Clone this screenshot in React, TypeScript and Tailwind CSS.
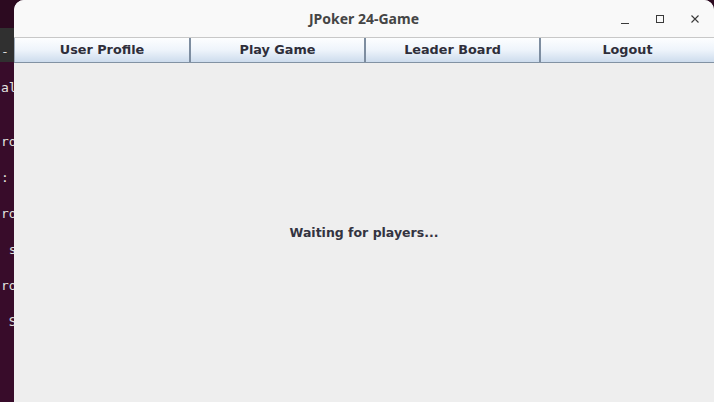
const termLines = ["al", "", "", "ro", "", ":", "", "ro", "", " s", "", "ro", "", " S"];

const tabs = ["User Profile", "Play Game", "Leader Board", "Logout"];

function WindowControls() {
  return (
    <div className="flex items-center gap-[25px] pr-[14px] text-[#3a3a3a]">
      <svg width="10" height="10" viewBox="0 0 10 10" className="mt-[2px]">
        <path d="M1 8.5h8" stroke="currentColor" strokeWidth="1.1" />
      </svg>
      <svg width="10" height="10" viewBox="0 0 10 10">
        <rect x="1.5" y="1.5" width="7" height="7" fill="none" stroke="currentColor" strokeWidth="1" />
      </svg>
      <svg width="10" height="10" viewBox="0 0 10 10">
        <path d="M1.5 1.5l7 7M8.5 1.5l-7 7" stroke="currentColor" strokeWidth="1.1" />
      </svg>
    </div>
  );
}

export default function App() {
  return (
    <div className="w-[714px] h-[402px] flex bg-[#2c0a20] overflow-hidden">
      <div className="w-[14px] flex flex-col overflow-hidden shrink-0">
        <div className="h-[28px] bg-[#2c0a20]" />
        <div className="h-[34px] bg-[#303030] text-[#d8d8d8] font-['DejaVu_Sans_Mono',monospace] text-[13px] leading-[18px] pt-[15px] pl-[1px]">
          -
        </div>
        <div className="flex-1 bg-[#380c2a] pt-[17px] text-[#e4e4e0] font-['DejaVu_Sans_Mono',monospace] text-[13px] leading-[18px] whitespace-pre pl-[1px]">
          {termLines.map((l, i) => (
            <div key={i} className="h-[18px]">{l}</div>
          ))}
        </div>
      </div>

      <div className="flex-1 flex flex-col rounded-t-[10px] overflow-hidden bg-[#eeeeee]">
        <div className="h-[38px] bg-[#f9f9f9] border-b border-[#c8c8c8] flex items-center relative">
          <div className="flex-1 text-center text-[14px] font-bold text-[#454545] font-['Noto_Sans',sans-serif]">
            JPoker 24-Game
          </div>
          <div className="absolute right-0 top-0 h-full flex items-center">
            <WindowControls />
          </div>
        </div>

        <div className="grid grid-cols-4 h-[25px] border-b border-[#8292a3]">
          {tabs.map((t, i) => (
            <div
              key={t}
              className={`flex items-center justify-center bg-gradient-to-b from-[#fdfeff] via-[#eef4fb] to-[#cddced] text-[12.8px] font-bold text-[#2e2e3a] font-['DejaVu_Sans',sans-serif] ${i > 0 ? "border-l-2 border-[#7d8da0]" : "border-l border-[#a0adbb]"}`}
            >
              {t}
            </div>
          ))}
        </div>

        <div className="flex-1 flex items-center justify-center pt-[2px]">
          <span className="text-[12.5px] font-bold text-[#333340] font-['DejaVu_Sans',sans-serif]">
            Waiting for players...
          </span>
        </div>
      </div>
    </div>
  );
}
